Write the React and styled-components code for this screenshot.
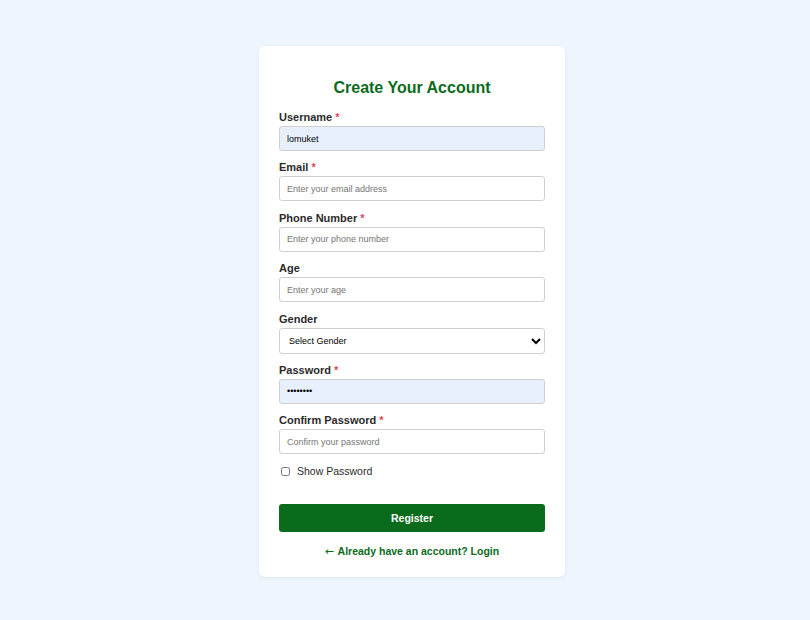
import React, { useState } from "react";
import styled, { createGlobalStyle } from "styled-components";

const GlobalStyle = createGlobalStyle`
  * { box-sizing: border-box; }
  body {
    margin: 0;
    background: #eef5fd;
    font-family: "Liberation Sans", Arial, sans-serif;
  }
`;

const Page = styled.div`
  display: flex;
  justify-content: center;
  padding: 46px 0 44px 14px;
`;

const Card = styled.form`
  width: 306px;
  background: #fff;
  border-radius: 6px;
  padding: 21px 20px 18px;
  box-shadow: 0 1px 4px rgba(0, 0, 0, 0.06);
`;

const Title = styled.h2`
  margin: 11px 0 12px;
  text-align: center;
  color: #0b6b1d;
  font-size: 16px;
  line-height: 20px;
  font-weight: 700;
`;

const Field = styled.div`
  display: flex;
  flex-direction: column;
  margin-bottom: 9.4px;
`;

const Label = styled.label`
  font-size: 11px;
  line-height: 14px;
  font-weight: 700;
  color: #2b2b2b;
  margin-bottom: 2px;
`;

const Req = styled.span`
  color: #e0455a;
`;

const Input = styled.input`
  height: 25px;
  width: 100%;
  padding: 0 7px;
  border: 1px solid #cfcfcf;
  border-radius: 3px;
  font-family: "Liberation Sans", Arial, sans-serif;
  font-size: 9px;
  color: #000;
  background: ${(p) => (p.$filled ? "#e8f0fe" : "#fff")};
  outline: none;
  &::placeholder {
    color: #757575;
  }
`;

const Select = styled.select`
  height: 26px;
  width: 100%;
  padding: 0 4px 0 5px;
  border: 1px solid #cfcfcf;
  border-radius: 3px;
  font-family: "Liberation Sans", Arial, sans-serif;
  font-size: 9px;
  color: #000;
  background: #fff;
`;

const CheckRow = styled.label`
  display: flex;
  align-items: center;
  gap: 7px;
  margin: 11px 0 0 2px;
  font-size: 10.5px;
  color: #2b2b2b;
  input {
    margin: 0;
    width: 9px;
    height: 9px;
  }
`;

const Button = styled.button`
  display: block;
  width: 100%;
  height: 28px;
  margin-top: 27px;
  border: none;
  border-radius: 3px;
  background: #0b6b1d;
  color: #fff;
  font-family: "Liberation Sans", Arial, sans-serif;
  font-size: 10.5px;
  font-weight: 700;
`;

const LoginLink = styled.a`
  display: block;
  margin-top: 12px;
  text-align: center;
  color: #0b6b1d;
  font-size: 10.5px;
  line-height: 14px;
  font-weight: 700;
  text-decoration: none;
`;

const Arrow = styled.span`
  font-family: "DejaVu Sans", sans-serif;
  font-weight: 400;
  font-size: 11px;
  margin-right: 1px;
`;

const App = () => {
  const [show, setShow] = useState(false);
  return (
    <Page>
      <GlobalStyle />
      <Card onSubmit={(e) => e.preventDefault()}>
        <Title>Create Your Account</Title>
        <Field>
          <Label>
            Username <Req>*</Req>
          </Label>
          <Input $filled defaultValue="lomuket" />
        </Field>
        <Field>
          <Label>
            Email <Req>*</Req>
          </Label>
          <Input placeholder="Enter your email address" />
        </Field>
        <Field>
          <Label>
            Phone Number <Req>*</Req>
          </Label>
          <Input placeholder="Enter your phone number" />
        </Field>
        <Field>
          <Label>Age</Label>
          <Input placeholder="Enter your age" />
        </Field>
        <Field>
          <Label>Gender</Label>
          <Select defaultValue="">
            <option value="">Select Gender</option>
            <option value="m">Male</option>
            <option value="f">Female</option>
          </Select>
        </Field>
        <Field>
          <Label>
            Password <Req>*</Req>
          </Label>
          <Input $filled type={show ? "text" : "password"} defaultValue="secret12" />
        </Field>
        <Field>
          <Label>
            Confirm Password <Req>*</Req>
          </Label>
          <Input type={show ? "text" : "password"} placeholder="Confirm your password" />
        </Field>
        <CheckRow>
          <input type="checkbox" checked={show} onChange={() => setShow(!show)} />
          Show Password
        </CheckRow>
        <Button type="submit">Register</Button>
        <LoginLink href="#">
          <Arrow>←</Arrow> Already have an account? Login
        </LoginLink>
      </Card>
    </Page>
  );
};

export default App;
